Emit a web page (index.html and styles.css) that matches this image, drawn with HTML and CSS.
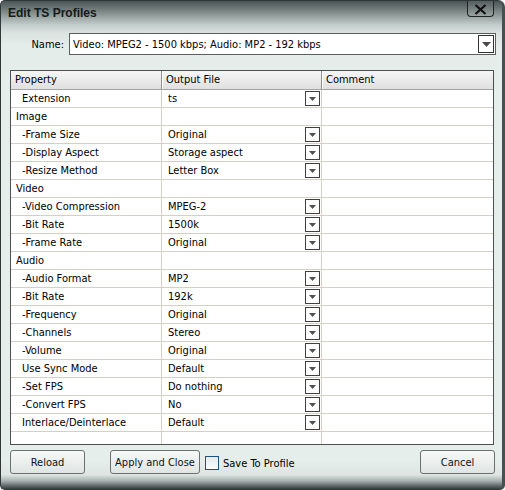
FILE: index.html
```html
<!DOCTYPE html>
<html>
<head>
<meta charset="utf-8">
<title>Edit TS Profiles</title>
<link rel="stylesheet" href="styles.css">
</head>
<body>
<div class="window">
  <div class="titlebar">
    <div class="title">Edit TS Profiles</div>
    <div class="close"><svg width="13" height="11" viewBox="0 0 13 11"><path d="M1.5 1 L11.5 10 M11.5 1 L1.5 10" stroke="#111" stroke-width="2.3" fill="none"/></svg></div>
  </div>
  <div class="name-row">
    <div class="name-label">Name:</div>
    <div class="combo">
      <span class="combo-text">Video: MPEG2 - 1500 kbps; Audio: MP2 - 192 kbps</span>
      <span class="combo-btn"><svg width="9" height="5" viewBox="0 0 9 5"><polygon points="0,0 9,0 4.5,5" fill="#4a4a4a"/></svg></span>
    </div>
  </div>
  <div class="grid">
    <div class="row head"><div class="cell">Property</div><div class="cell">Output File</div><div class="cell">Comment</div></div>
    <div class="row"><div class="cell prop sub">Extension</div><div class="cell val"><span>ts</span><span class="dd"><svg width="7" height="4" viewBox="0 0 7 4"><polygon points="0,0 7,0 3.5,4" fill="#505050"/></svg></span></div><div class="cell"></div></div>
    <div class="row"><div class="cell prop">Image</div><div class="cell val"></div><div class="cell"></div></div>
    <div class="row"><div class="cell prop sub">-Frame Size</div><div class="cell val"><span>Original</span><span class="dd"><svg width="7" height="4" viewBox="0 0 7 4"><polygon points="0,0 7,0 3.5,4" fill="#505050"/></svg></span></div><div class="cell"></div></div>
    <div class="row"><div class="cell prop sub">-Display Aspect</div><div class="cell val"><span>Storage aspect</span><span class="dd"><svg width="7" height="4" viewBox="0 0 7 4"><polygon points="0,0 7,0 3.5,4" fill="#505050"/></svg></span></div><div class="cell"></div></div>
    <div class="row"><div class="cell prop sub">-Resize Method</div><div class="cell val"><span>Letter Box</span><span class="dd"><svg width="7" height="4" viewBox="0 0 7 4"><polygon points="0,0 7,0 3.5,4" fill="#505050"/></svg></span></div><div class="cell"></div></div>
    <div class="row"><div class="cell prop">Video</div><div class="cell val"></div><div class="cell"></div></div>
    <div class="row"><div class="cell prop sub">-Video Compression</div><div class="cell val"><span>MPEG-2</span><span class="dd"><svg width="7" height="4" viewBox="0 0 7 4"><polygon points="0,0 7,0 3.5,4" fill="#505050"/></svg></span></div><div class="cell"></div></div>
    <div class="row"><div class="cell prop sub">-Bit Rate</div><div class="cell val"><span>1500k</span><span class="dd"><svg width="7" height="4" viewBox="0 0 7 4"><polygon points="0,0 7,0 3.5,4" fill="#505050"/></svg></span></div><div class="cell"></div></div>
    <div class="row"><div class="cell prop sub">-Frame Rate</div><div class="cell val"><span>Original</span><span class="dd"><svg width="7" height="4" viewBox="0 0 7 4"><polygon points="0,0 7,0 3.5,4" fill="#505050"/></svg></span></div><div class="cell"></div></div>
    <div class="row"><div class="cell prop">Audio</div><div class="cell val"></div><div class="cell"></div></div>
    <div class="row"><div class="cell prop sub">-Audio Format</div><div class="cell val"><span>MP2</span><span class="dd"><svg width="7" height="4" viewBox="0 0 7 4"><polygon points="0,0 7,0 3.5,4" fill="#505050"/></svg></span></div><div class="cell"></div></div>
    <div class="row"><div class="cell prop sub">-Bit Rate</div><div class="cell val"><span>192k</span><span class="dd"><svg width="7" height="4" viewBox="0 0 7 4"><polygon points="0,0 7,0 3.5,4" fill="#505050"/></svg></span></div><div class="cell"></div></div>
    <div class="row"><div class="cell prop sub">-Frequency</div><div class="cell val"><span>Original</span><span class="dd"><svg width="7" height="4" viewBox="0 0 7 4"><polygon points="0,0 7,0 3.5,4" fill="#505050"/></svg></span></div><div class="cell"></div></div>
    <div class="row"><div class="cell prop sub">-Channels</div><div class="cell val"><span>Stereo</span><span class="dd"><svg width="7" height="4" viewBox="0 0 7 4"><polygon points="0,0 7,0 3.5,4" fill="#505050"/></svg></span></div><div class="cell"></div></div>
    <div class="row"><div class="cell prop sub">-Volume</div><div class="cell val"><span>Original</span><span class="dd"><svg width="7" height="4" viewBox="0 0 7 4"><polygon points="0,0 7,0 3.5,4" fill="#505050"/></svg></span></div><div class="cell"></div></div>
    <div class="row"><div class="cell prop sub">Use Sync Mode</div><div class="cell val"><span>Default</span><span class="dd"><svg width="7" height="4" viewBox="0 0 7 4"><polygon points="0,0 7,0 3.5,4" fill="#505050"/></svg></span></div><div class="cell"></div></div>
    <div class="row"><div class="cell prop sub">-Set FPS</div><div class="cell val"><span>Do nothing</span><span class="dd"><svg width="7" height="4" viewBox="0 0 7 4"><polygon points="0,0 7,0 3.5,4" fill="#505050"/></svg></span></div><div class="cell"></div></div>
    <div class="row"><div class="cell prop sub">-Convert FPS</div><div class="cell val"><span>No</span><span class="dd"><svg width="7" height="4" viewBox="0 0 7 4"><polygon points="0,0 7,0 3.5,4" fill="#505050"/></svg></span></div><div class="cell"></div></div>
    <div class="row"><div class="cell prop sub">Interlace/Deinterlace</div><div class="cell val"><span>Default</span><span class="dd"><svg width="7" height="4" viewBox="0 0 7 4"><polygon points="0,0 7,0 3.5,4" fill="#505050"/></svg></span></div><div class="cell"></div></div>
    <div class="row filler"><div class="cell"></div><div class="cell"></div><div class="cell"></div></div>
  </div>
  <div class="buttons">
    <div class="btn reload">Reload</div>
    <div class="btn apply">Apply and Close</div>
    <div class="check"></div>
    <div class="check-label">Save To Profile</div>
    <div class="btn cancel">Cancel</div>
  </div>
</div>
</body>
</html>
```
FILE: styles.css
```css
* { box-sizing: border-box; }
html, body { margin: 0; padding: 0; background: #ffffff; }
body {
  width: 505px;
  height: 490px;
  font-family: "DejaVu Sans Condensed", "DejaVu Sans", sans-serif;
  font-stretch: condensed;
  font-size: 11px;
  color: #000;
}
.window {
  width: 505px;
  height: 490px;
  border: 1px solid #2f3838;
  border-right: 3px solid #465050;
  border-radius: 5px 7px 5px 5px;
  overflow: hidden;
  display: flex;
  flex-direction: column;
  background: linear-gradient(to bottom,
    #4b5454 0px, #6f7a79 8px, #9aa5a3 16px, #c3cdcb 24px, #dbe3e1 32px,
    #e5edeb 44px, #e6eeec 460px, #dde4e2 474px, #a7b0ae 480px,
    #5d6666 485px, #353d3d 488px);
}
.titlebar {
  height: 26px;
  display: flex;
  align-items: flex-start;
}
.title {
  font-family: "Liberation Sans", Arial, sans-serif;
  font-stretch: normal;
  font-weight: bold;
  font-size: 12px;
  line-height: 14px;
  margin: 5px 0 0 7px;
  color: #151a1a;
}
.close {
  width: 27px;
  height: 16px;
  margin-left: auto;
  margin-right: 8px;
  border: 1px solid #1e2424;
  border-top: none;
  border-radius: 0 0 4px 4px;
  background: rgba(255, 255, 255, 0.06);
  display: flex;
  align-items: center;
  justify-content: center;
  padding-top: 2px;
}
.name-row {
  margin-top: 6px;
  height: 22px;
  display: flex;
  align-items: center;
}
.name-label {
  width: 63px;
  margin-right: 5px;
  text-align: right;
}
.combo {
  width: 427px;
  height: 22px;
  border: 1px solid #5a5e5e;
  background: #fff;
  display: flex;
  align-items: center;
  padding-left: 3px;
}
.combo-text { flex: 1; white-space: nowrap; }
.combo-btn {
  width: 16px;
  height: 18px;
  margin-right: 1px;
  border: 1px solid #333;
  background: #fff;
  display: flex;
  align-items: center;
  justify-content: center;
}
.grid {
  margin: 15px 0 0 9px;
  width: 484px;
  height: 375px;
  border: 1px solid #4c5050;
  background: #fff;
  display: flex;
  flex-direction: column;
}
.row {
  display: grid;
  grid-template-columns: 151px 160px 1fr;
  height: 18px;
  flex: none;
}
.cell {
  border-right: 1px solid #d4d0c8;
  border-bottom: 1px solid #d4d0c8;
  line-height: 17px;
  white-space: nowrap;
  overflow: hidden;
}
.cell:last-child { border-right: none; }
.head { height: 19px; }
.head .cell {
  line-height: 18px;
  padding-left: 4px;
  background: linear-gradient(to bottom, #f6f6f6, #e0e0e0);
  border-right-color: #8e9090;
  border-bottom-color: #a4a6a6;
}
.head .cell + .cell { box-shadow: inset 1px 0 0 #ffffff; }
.prop { padding-left: 5px; }
.prop.sub { padding-left: 11px; }
.val {
  padding-left: 6px;
  padding-right: 1px;
  display: flex;
  align-items: center;
  justify-content: space-between;
}
.dd {
  width: 15px;
  height: 15px;
  border: 1px solid #404040;
  background: #fff;
  display: flex;
  align-items: center;
  justify-content: center;
}
.filler { flex: 1; height: auto; }
.filler .cell { border-bottom: none; }
.buttons {
  margin-top: 5px;
  height: 24px;
  display: flex;
  align-items: center;
  padding-left: 9px;
  padding-right: 7px;
}
.btn {
  height: 24px;
  border: 1px solid #6b7170;
  border-radius: 3px;
  background: linear-gradient(to bottom, #f7f9f9, #dfe5e3);
  display: flex;
  align-items: center;
  justify-content: center;
  color: #111;
}
.reload { width: 75px; }
.apply { width: 90px; margin-left: 25px; }
.check {
  width: 14px;
  height: 14px;
  margin-left: 5px;
  margin-top: 2px;
  border: 1px solid #21507e;
  background: linear-gradient(to bottom, #e6eaea, #fbfcfc);
}
.check-label { margin-left: 4px; margin-top: 2px; }
.cancel { width: 75px; margin-left: auto; }
```
